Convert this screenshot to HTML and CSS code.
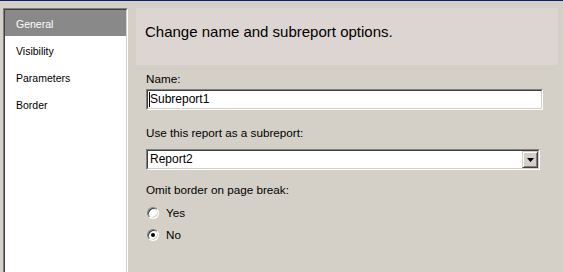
FILE: index.html
```html
<!DOCTYPE html>
<html lang="en">
<head>
<meta charset="UTF-8">
<title>Subreport Properties</title>
<link rel="stylesheet" href="styles.css">
</head>
<body>

<div class="dialog">
    <!-- Page list -->
    <div class="nav">
        <ul class="nav-list">
            <li class="nav-item selected">General</li>
            <li class="nav-item">Visibility</li>
            <li class="nav-item">Parameters</li>
            <li class="nav-item">Border</li>
        </ul>
    </div>

    <!-- Page content -->
    <div class="page">
        <div class="banner">Change name and subreport options.</div>

        <div class="form">
            <div class="label label-first">Name:</div>
            <div class="sunken field">
                <div class="sunken-inner">
                    <span class="caret"></span><span class="value">Subreport1</span>
                </div>
            </div>

            <div class="label label-gap">Use this report as a subreport:</div>
            <div class="sunken combo">
                <div class="sunken-inner">
                    <span class="value">Report2</span>
                    <span class="combo-btn">
                        <svg width="7" height="4" viewBox="0 0 7 4"><polygon points="0,0 7,0 3.5,4" fill="#000"/></svg>
                    </span>
                </div>
            </div>

            <div class="label label-gap2">Omit border on page break:</div>
            <div class="radio-row radio-first"><span class="radio"></span>Yes</div>
            <div class="radio-row"><span class="radio checked"></span>No</div>
        </div>
    </div>
</div>

</body>
</html>
```

FILE: styles.css
```css
html, body {
    margin: 0;
    height: 272px;
    overflow: hidden;
}

body {
    background-color: #d4d0c8; /* classic dialog face */
    border-top: 1px solid #0a246a;
    box-sizing: border-box;
    font-family: "Liberation Sans", Arial, sans-serif;
    color: #000;
}

.dialog {
    display: flex;
    gap: 8px;
    padding: 7px 5px 0 3px;
}

/* Left page list (runs off the bottom, so no bottom edge) */
.nav {
    width: 125px;
    height: 264px;
    flex-shrink: 0;
    box-sizing: border-box;
    border: 1px solid;
    border-bottom: 0;
    border-color: #808080 #ffffff #ffffff #808080;
}

.nav-list {
    list-style: none;
    margin: 0;
    padding: 0;
    height: 100%;
    box-sizing: border-box;
    border: 1px solid;
    border-bottom: 0;
    border-color: #404040 #d4d0c8 #d4d0c8 #404040;
    background-color: #ffffff;
}

.nav-item {
    height: 26px;
    margin-bottom: 1px;
    padding: 2px 0 0 11px;
    box-sizing: border-box;
    line-height: 25px;
    font-size: 10.5px;
}

.nav-item.selected {
    background-color: #898989;
    color: #ffffff;
}

/* Right side */
.page {
    flex: 1;
}

.banner {
    height: 57px;
    box-sizing: border-box;
    padding: 15px 9px 0;
    background-color: #ddd5d1;
    font-size: 15px;
    line-height: 17px;
}

.form {
    padding-left: 10px;
}

.label {
    font-size: 11.7px;
    line-height: 14px;
}

.label-first { margin-top: 7px; }
.label-gap { margin-top: 16px; }
.label-gap2 { margin-top: 13px; }

/* Sunken 3D edit boxes */
.sunken {
    height: 21px;
    box-sizing: border-box;
    border: 1px solid;
    border-color: #808080 #ffffff #ffffff #808080;
}

.sunken-inner {
    display: flex;
    align-items: center;
    height: 100%;
    box-sizing: border-box;
    border: 1px solid;
    border-color: #404040 #d4d0c8 #d4d0c8 #404040;
    background-color: #ffffff;
}

.field {
    width: 397px;
    margin-top: 3px;
}

.combo {
    width: 394px;
    margin-top: 9px;
}

.value {
    flex: 1;
    padding-left: 2px;
    font-size: 12px;
    line-height: 17px;
}

.caret {
    width: 1px;
    height: 15px;
    margin-left: 1px;
    margin-right: -2px;
    background-color: #000;
}

.combo-btn {
    width: 16px;
    height: 17px;
    box-sizing: border-box;
    display: flex;
    align-items: center;
    justify-content: center;
    background-color: #d4d0c8;
    border: 1px solid;
    border-color: #d4d0c8 #404040 #404040 #d4d0c8;
    box-shadow: inset 1px 1px #ffffff, inset -1px -1px #808080;
}

.combo-btn svg {
    display: block;
}

/* Radio buttons */
.radio-row {
    display: flex;
    align-items: center;
    height: 14px;
    margin-top: 8px;
    padding-left: 1px;
    font-size: 11.7px;
    line-height: 14px;
}

.radio-row.radio-first {
    margin-top: 9px;
}

.radio {
    position: relative;
    width: 12px;
    height: 12px;
    margin-right: 7px;
    box-sizing: border-box;
    border-radius: 50%;
    border: 1px solid;
    border-color: #808080 #ffffff #ffffff #808080;
    box-shadow: inset 1px 1px #404040, inset -1px -1px #d4d0c8;
    background-color: #ffffff;
}

.radio.checked::after {
    content: "";
    position: absolute;
    left: 3px;
    top: 3px;
    width: 4px;
    height: 4px;
    border-radius: 50%;
    background-color: #000;
}
```
